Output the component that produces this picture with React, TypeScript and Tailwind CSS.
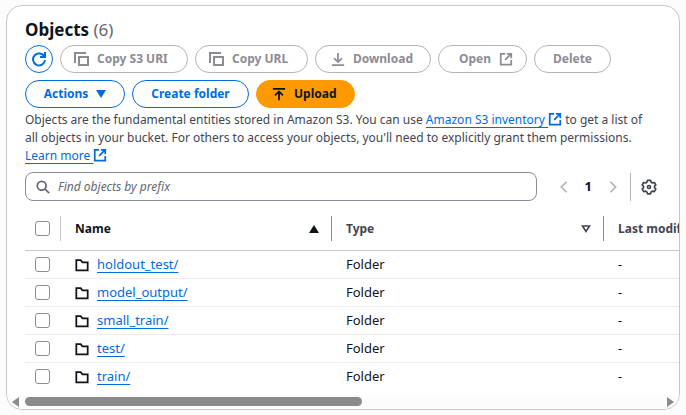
import type { ReactNode } from "react";

const stroke = { fill: "none", stroke: "currentColor", strokeWidth: 2 } as const;

function Icon({ children, className = "size-4" }: { children: ReactNode; className?: string }) {
  return (
    <svg viewBox="0 0 16 16" className={`shrink-0 ${className}`} aria-hidden="true" {...stroke}>
      {children}
    </svg>
  );
}

const CopyIcon = () => (
  <Icon>
    <path d="M2 12V2h11" />
    <path d="M6 6h9v8H6z" />
  </Icon>
);

const ExternalIcon = ({ className = "size-[14px]" }: { className?: string }) => (
  <Icon className={className}>
    <path d="M14 9v5.500H2V2h5M9 2h5v5M7 9l7-7" />
  </Icon>
);

const FolderIcon = () => (
  <Icon className="size-[14px]">
    <path d="M1.500 2.500h5l2 2.500h6v9h-13z" />
  </Icon>
);

const base = "flex h-7 items-center gap-2 rounded-full border text-xs font-bold leading-none whitespace-nowrap";
const muted = `${base} border-[#b4b4bb] text-[#8c8c94]`;
const blue = `${base} justify-center border-[#006ce0] text-[#006ce0]`;

const rows = ["holdout_test/", "model_output/", "small_train/", "test/", "train/"];

const box = "block size-[15px] appearance-none rounded-[3px] border border-[#8c8c94] bg-white";

function Divider({ dark = false }: { dark?: boolean }) {
  return <span className={`h-[25px] w-px shrink-0 ${dark ? "bg-[#8c8c94]" : "bg-[#c6c6cd]"}`} />;
}

const link = "text-[#006ce0] underline underline-offset-[3px] [text-decoration-skip-ink:none]";

export default function App() {
  return (
    <main className="bg-[#fcfcfd] px-[6px] py-[5px] font-['Noto_Sans','Open_Sans',sans-serif] text-[13px] text-[#0f141a]">
      <section className="overflow-hidden rounded-2xl border border-[#c6c6cd] bg-white">
        <div className="px-[18px] pt-3">
          <h2 className="text-[17px] leading-6 font-bold">
            Objects <span className="font-normal text-[#656871]">(6)</span>
          </h2>
          <div className="mt-[3px] flex flex-wrap gap-[7px]">
            <button aria-label="Refresh" className={`${blue} w-7`}>
              <Icon>
                <path d="M14 1v5H9" />
                <path d="M13.500 6A6 6 0 1 0 14 9" />
              </Icon>
            </button>
            <button className={`${muted} w-32 pl-3`}><CopyIcon />Copy S3 URI</button>
            <button className={`${muted} w-[113px] pl-3`}><CopyIcon />Copy URL</button>
            <button className={`${muted} w-[116px] pl-[15px]`}>
              <Icon className="size-[14px]"><path d="M1 15h14M8 1v10M3.500 7L8 11.500 12.500 7" /></Icon>
              Download
            </button>
            <button className={`${muted} w-[89px] pl-5`}>Open<ExternalIcon /></button>
            <button className={`${muted} w-[77px] justify-center`}>Delete</button>
            <button className={`${blue} w-[100px]`}>
              Actions
              <svg viewBox="0 0 10 8" className="h-2 w-[10px]" aria-hidden="true"><path d="M0 0h10L5 8z" fill="currentColor" /></svg>
            </button>
            <button className={`${blue} w-[117px]`}>Create folder</button>
            <button className={`${base} w-[99px] border-[#ff9900] bg-[#ff9900] pl-[15px]`}>
              <Icon className="size-[14px]"><path d="M1 2h14M8 15V5M3.500 9.500L8 5l4.500 4.500" /></Icon>
              Upload
            </button>
          </div>
          <p className="mt-[3px] pr-4 text-xs leading-[18px] text-[#424650]">
            Objects are the fundamental entities stored in Amazon S3. You can use{" "}
            <a href="#inventory" className={link}>Amazon S3 inventory </a>
            <ExternalIcon className="inline size-[14px] align-[-2px] text-[#006ce0]" /> to get a list of all objects in your bucket. For
            others to access your objects, you'll need to explicitly grant them permissions.{" "}
            <a href="#learn" className={link}>Learn more </a>
            <ExternalIcon className="inline size-[14px] align-[-2px] text-[#006ce0]" />
          </p>
          <div className="mt-[7px] flex items-center pr-1">
            <label className="mr-5 flex h-[29px] flex-1 items-center gap-2 rounded-lg border border-[#8c8c94] px-[10px]">
              <Icon className="size-[14px] text-[#656871]">
                <circle cx="6.500" cy="6.500" r="5" /><path d="M10 10l5 5" />
              </Icon>
              <input type="text" aria-label="Find objects by prefix" placeholder="Find objects by prefix" className="min-w-0 flex-1 text-xs italic outline-none placeholder:text-[#656871]" />
            </label>
            <div className="flex items-center gap-[10px]">
              <div className="flex items-center gap-[14px]">
                <button aria-label="Previous page" className="text-[#b4b4bb]"><Icon className="size-[14px]"><path d="M11 2L5 8l6 6" /></Icon></button>
                <b>1</b>
                <button aria-label="Next page" className="text-[#b4b4bb]"><Icon className="size-[14px]"><path d="M5 2l6 6-6 6" /></Icon></button>
              </div>
              <span className="h-7 w-px bg-[#b4b4bb]" />
              <button aria-label="Preferences" className="text-[#424650]">
                <Icon className="size-4">
                  <path strokeLinejoin="round" d="M6.500 1.300h3l.6 1.900 1.200.7 2-.4 1.500 2.500-1.300 1.400v1.300l1.300 1.400-1.500 2.500-2-.4-1.200.7-.6 1.900h-3l-.6-1.900-1.200-.7-2 .4L1.200 10.100l1.300-1.400V7.400L1.200 6l1.500-2.500 2 .4 1.200-.7z" strokeWidth="1.700" />
                  <circle cx="8" cy="8" r="1.500" strokeWidth="1.700" />
                </Icon>
              </button>
            </div>
          </div>
        </div>
        <div className="mt-[7px] overflow-hidden pl-[18px]">
          <table className="w-[760px] table-fixed border-collapse text-left">
            <colgroup>
              <col className="w-9" /><col className="w-[271px]" /><col className="w-[272px]" /><col />
            </colgroup>
            <thead className="text-xs">
              <tr className="h-[42px] border-b border-[#c6c6cd]">
                <th className="p-0"><div className="flex items-center justify-between pl-[10px]"><input type="checkbox" aria-label="Select all" className={box} /><Divider /></div></th>
                <th className="p-0">
                  <div className="flex items-center pl-[14px]"><span className="flex-1">Name</span>
                    <svg viewBox="0 0 10 8" className="mr-3 h-2 w-[10px]" aria-hidden="true"><path d="M0 8h10L5 0z" fill="currentColor" /></svg><Divider dark /></div>
                </th>
                <th className="p-0 text-[#424650]">
                  <div className="flex items-center pl-[14px]"><span className="flex-1">Type</span>
                    <svg viewBox="0 0 10 8" className="mr-3 h-2 w-[10px]" aria-hidden="true"><path d="M1.500 1h7L5 6.500z" fill="none" stroke="currentColor" strokeWidth="1.600" /></svg><Divider dark /></div>
                </th>
                <th className="p-0 pl-[14px] text-[#424650]">Last modified</th>
              </tr>
            </thead>
            <tbody>
              {rows.map((name) => (
                <tr key={name} className="h-7 border-b border-[#ebebf0] last:border-transparent">
                  <td className="p-0 pl-[10px]"><input type="checkbox" aria-label={`Select ${name}`} className={box} /></td>
                  <td className="p-0 pt-0.5 pl-[14px]">
                    <div className="flex items-center gap-2"><FolderIcon /><a href={`#${name}`} className={link}>{name}</a></div>
                  </td>
                  <td className="p-0 pt-0.5 pl-[14px]">Folder</td>
                  <td className="p-0 pt-0.5 pl-[14px]">-</td>
                </tr>
              ))}
            </tbody>
          </table>
        </div>
        <div className="mt-1 flex h-[14px] items-center justify-between bg-[#fcfcfc] px-[5px] text-[#8b8b8b]">
          <svg viewBox="0 0 7 10" className="h-[10px] w-[7px]" aria-hidden="true"><path d="M7 0v10L0 5z" fill="currentColor" /></svg>
          <div className="mx-[6px] flex-1"><div className="h-[9px] w-[53%] rounded-full bg-[#8b8b8b]" /></div>
          <svg viewBox="0 0 7 10" className="h-[10px] w-[7px]" aria-hidden="true"><path d="M0 0v10l7-5z" fill="currentColor" /></svg>
        </div>
      </section>
    </main>
  );
}
